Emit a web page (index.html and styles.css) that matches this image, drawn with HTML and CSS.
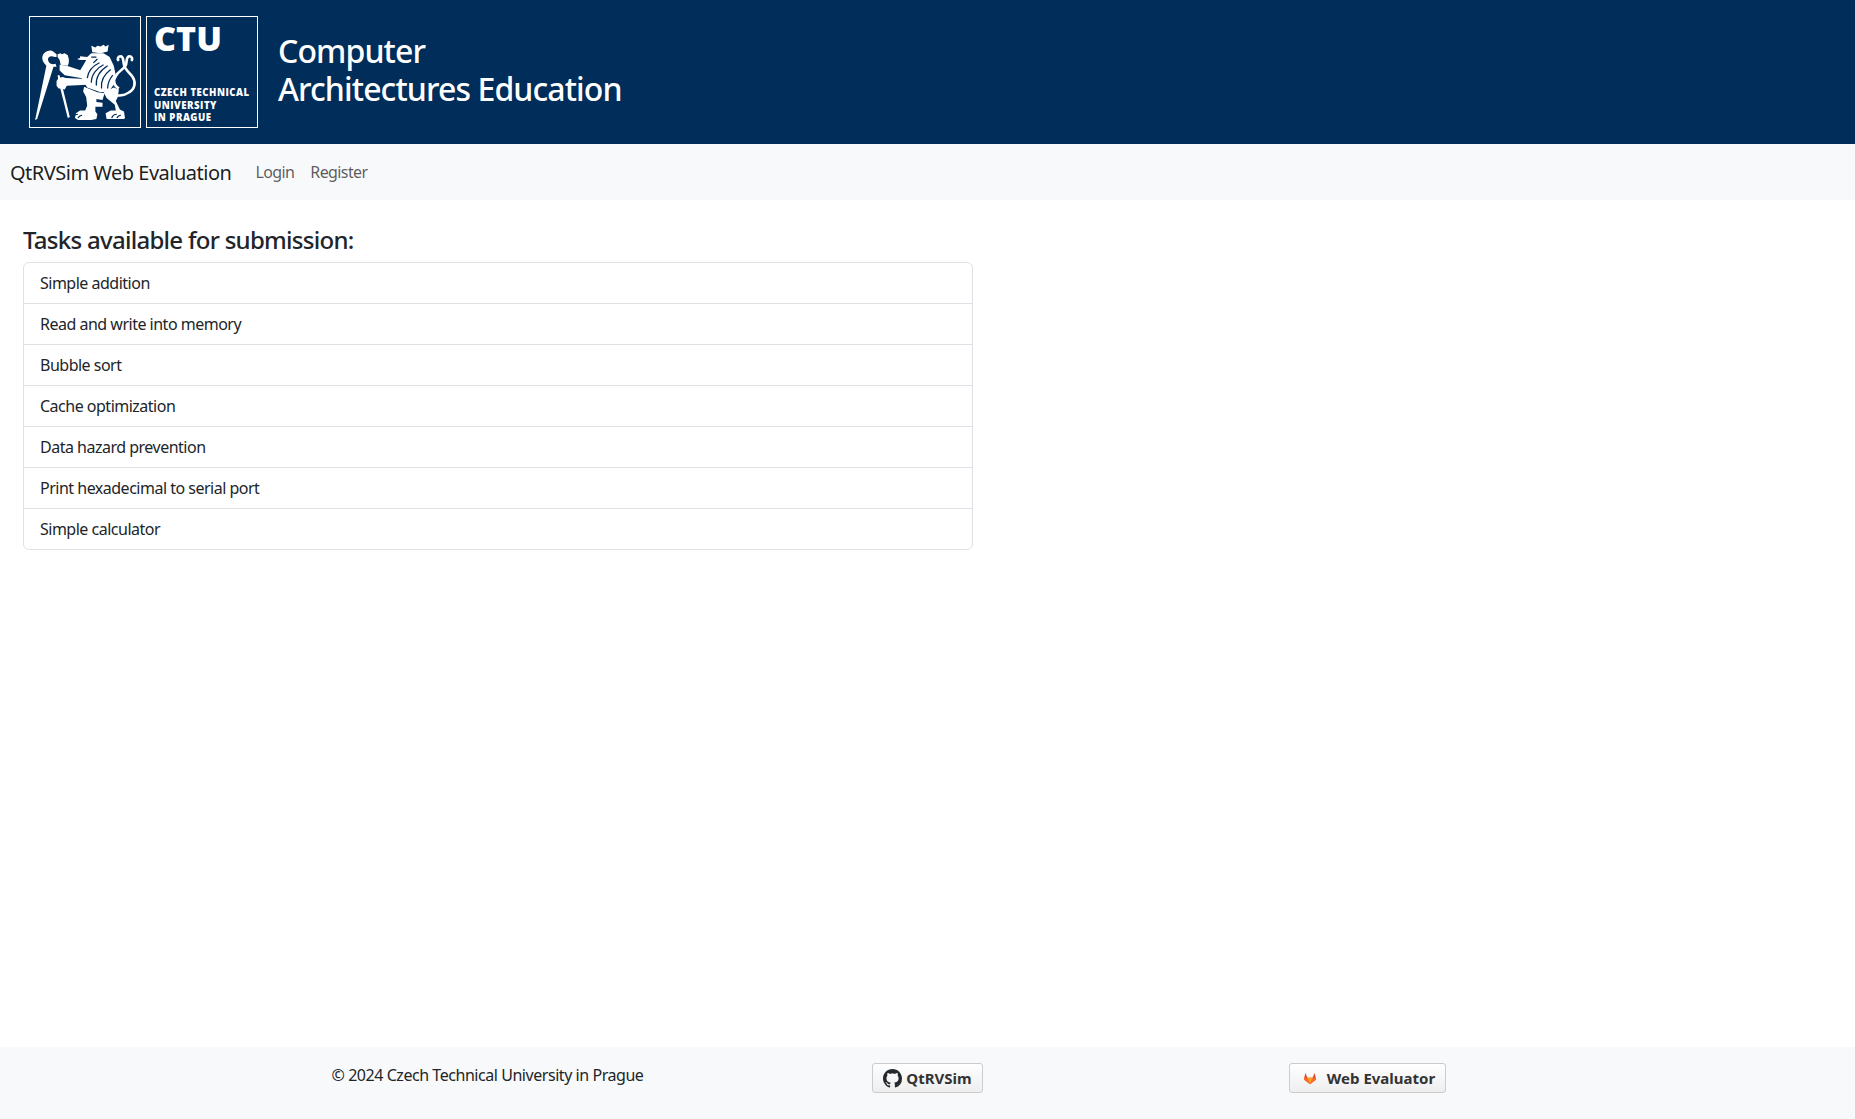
FILE: index.html
```html
<!DOCTYPE html>
<html lang="en">
<head>
<meta charset="utf-8">
<title>QtRVSim Web Evaluation</title>
<link rel="stylesheet" href="styles.css">
</head>
<body>
<header class="site-header">
  <div class="logo">
    <div class="logo-box">
      <svg class="lion" viewBox="0 0 112 112" aria-hidden="true">
        <g transform="translate(0 3) scale(1.04 0.97)">
        <g fill="#fff">
          <path fill-rule="evenodd" d="M20 32c-5 0-8 4-8 8 0 3 2 6 4 8L5 105l2-1 16-55 3 0-1-3c-3 1-6 0-7-3-1-2 0-5 3-5 2 0 3 1 5 1l0-3c-2-2-4-4-6-4z"/>
          <path d="M27 36l3-1 1 1 3-1 3 2 1 4 0 4-1 3-7-1-1-5-2-3z"/>
          <path d="M27 58l2 0 10 44-2 1-9-38z"/>
          <path d="M29 47l7 1 17 6 2 8-21-4-5-5z"/>
          <path d="M26 64l2-3 4-1 3 1 19 1 2 6-20 1-2 4-3-1-3 0-2-3z"/>
          <path d="M61 34l-1-7 4 2 2-2 3 1 3-2 2 2 3-2-1 7-7 2z"/>
          <path d="M49 38l7 1 4-4 12 0 6 4 4 9 2 10-2 10-5 7-8 1-13-5-5-9-2-9 4-7 2-4-6 0-3-1 3-1z"/>
          <path d="M53 70l13 6 7 1-2 7-6-1 0 3 6 1 0 4-7 0 0 5 2 3-1 5-5 1-13 0-3-2 1-5 4-3 5 0 2-5-1-9-3-6z"/>
          <path d="M72 76l10-5 5 2-1 8-2 4 4 9 4 2 1 7-1 1-17 0-1-6 5-3 5 0-1-6-8-7z"/>
        </g>
        <g fill="none" stroke="#fff" stroke-width="2.6">
          <path d="M78 78c6 2 14 2 19-2 6-4 7-11 3-17-3-4-7-7-8-12-1-4 0-8-3-9-3 0-4 3-2 5"/>
          <path d="M87 72c-5-3-6-9-3-13 2-5 8-7 10-12 1-4 0-8 3-9 3 0 4 3 2 5"/>
        </g>
        <g fill="none" stroke="#002d5a" stroke-width="1.2">
          <path d="M68 45c-6 3-11 8-12 16"/>
          <path d="M72 47c-6 3-12 10-12 19"/>
          <path d="M76 48c-6 4-12 11-11 21"/>
          <path d="M79 52c-5 4-10 11-9 20"/>
          <path d="M81 58c-3 4-5 9-5 14"/>
          <path d="M60 39h5M66 41l-4 4"/>
          <path d="M42 103c1-3 3-4 5-4M47 103c1-2 2-3 4-3"/>
          <path d="M80 103c1-3 3-4 5-4M85 103c1-2 2-3 4-3"/>
        </g>
        </g>
      </svg>
    </div>
    <div class="logo-box logo-text">
      <span class="ctu">CTU</span>
      <span class="ctu-name">CZECH TECHNICAL<br>UNIVERSITY<br>IN PRAGUE</span>
    </div>
  </div>
  <h1 class="site-title">Computer<br>Architectures Education</h1>
</header>

<nav class="navbar">
  <a class="brand" href="#">QtRVSim Web Evaluation</a>
  <a class="nav-link" href="#">Login</a>
  <a class="nav-link" href="#">Register</a>
</nav>

<main class="content">
  <h2 class="tasks-title">Tasks available for submission:</h2>
  <ul class="task-list">
    <li><a href="#">Simple addition</a></li>
    <li><a href="#">Read and write into memory</a></li>
    <li><a href="#">Bubble sort</a></li>
    <li><a href="#">Cache optimization</a></li>
    <li><a href="#">Data hazard prevention</a></li>
    <li><a href="#">Print hexadecimal to serial port</a></li>
    <li><a href="#">Simple calculator</a></li>
  </ul>
</main>

<footer class="footer">
  <div class="footer-row">
    <div class="footer-cell"><span class="copy">© 2024 Czech Technical University in Prague</span></div>
    <div class="footer-cell">
      <a class="btn" href="#">
        <svg class="btn-icon" viewBox="0 0 16 16" aria-hidden="true"><path fill="#24292e" d="M8 0C3.58 0 0 3.58 0 8c0 3.54 2.29 6.53 5.47 7.59.4.07.55-.17.55-.38 0-.19-.01-.82-.01-1.49-2.01.37-2.53-.49-2.69-.94-.09-.23-.48-.94-.82-1.13-.28-.15-.68-.52-.01-.53.63-.01 1.08.58 1.23.82.72 1.21 1.87.87 2.33.66.07-.52.28-.87.51-1.07-1.78-.2-3.64-.89-3.64-3.95 0-.87.31-1.59.82-2.15-.08-.2-.36-1.02.08-2.12 0 0 .67-.21 2.2.82.64-.18 1.32-.27 2-.27.68 0 1.36.09 2 .27 1.53-1.04 2.2-.82 2.2-.82.44 1.1.16 1.92.08 2.12.51.56.82 1.27.82 2.15 0 3.07-1.87 3.75-3.65 3.95.29.25.54.73.54 1.48 0 1.07-.01 1.93-.01 2.2 0 .21.15.46.55.38A8.013 8.013 0 0016 8c0-4.42-3.58-8-8-8z"/></svg>
        QtRVSim
      </a>
    </div>
    <div class="footer-cell">
      <a class="btn btn-gitlab" href="#">
        <svg class="gl-icon" viewBox="0 0 16 16" aria-hidden="true">
          <path fill="#e24329" d="M8 15 1 9.6 2.8 2.4 5 7.6h6l2.2-5.2L15 9.6z"/>
          <path fill="#fc6d26" d="M8 15 5 7.6H1.4L1 9.6zM8 15l3-7.4h3.6l.4 2z"/>
          <path fill="#fca326" d="M8 15 5 7.6h6z"/>
        </svg>
        Web Evaluator
      </a>
    </div>
  </div>
</footer>
</body>
</html>
```

FILE: styles.css
```css
* { box-sizing: border-box; }

html, body { height: 100%; }

body {
  margin: 0;
  min-height: 100vh;
  display: flex;
  flex-direction: column;
  font-family: "Noto Sans", "Open Sans", "Liberation Sans", sans-serif;
  font-size: 16px;
  color: #212529;
  background: #fff;
}

a { text-decoration: none; color: inherit; }

.site-header {
  height: 144px;
  flex: none;
  background: #002d5a;
  display: flex;
  align-items: center;
  padding-left: 29px;
  gap: 20px;
}

.logo { display: flex; gap: 5px; }

.logo-box {
  width: 112px;
  height: 112px;
  border: 1px solid #fff;
  color: #fff;
}

.lion { display: block; width: 110px; height: 110px; }

.logo-text {
  display: flex;
  flex-direction: column;
  justify-content: space-between;
  padding: 2px 0 3px 7px;
  font-family: "Open Sans", "Noto Sans", sans-serif;
}

.ctu { font-size: 34px; font-weight: 800; line-height: 38px; }

.ctu-name {
  font-size: 9.6px;
  font-weight: 800;
  line-height: 12.2px;
  letter-spacing: 0.5px;
  white-space: nowrap;
}

.site-title {
  margin: -5px 0 0;
  color: #fff;
  font-size: 32px;
  font-weight: 500;
  line-height: 38px;
  letter-spacing: -0.9px;
}

.navbar {
  height: 56px;
  flex: none;
  background: #f8f9fa;
  display: flex;
  align-items: center;
  padding-left: 10px;
}

.brand { font-size: 20px; color: rgba(0,0,0,.9); margin-right: 16px; letter-spacing: -0.5px; }

.nav-link { padding: 0 8px; color: rgba(0,0,0,.65); letter-spacing: -0.6px; }

.content { flex: 1; padding: 25px 0 0 23px; }

.tasks-title {
  margin: 0 0 7px;
  font-size: 24px;
  font-weight: 500;
  line-height: 30px;
  letter-spacing: -0.72px;
}

.task-list {
  width: 950px;
  margin: 0;
  padding: 0;
  list-style: none;
  border: 1px solid #dee2e6;
  border-radius: 6px;
}

.task-list li {
  height: 41px;
  padding: 0 16px;
  display: flex;
  align-items: center;
  border-top: 1px solid #dee2e6;
  letter-spacing: -0.5px;
}

.task-list li:first-child { height: 40px; border-top: 0; }

.footer {
  height: 72px;
  flex: none;
  background: #f8f9fa;
}

.footer-row {
  width: 1320px;
  margin: 0 auto;
  display: grid;
  grid-template-columns: repeat(3, 1fr);
}

.footer-cell { display: flex; justify-content: center; padding-top: 16px; }

.copy { color: #212529; letter-spacing: -0.45px; line-height: 24px; }

.btn {
  display: inline-flex;
  align-items: center;
  height: 30px;
  padding: 0 10px;
  gap: 4px;
  font-size: 15px;
  font-weight: 700;
  color: #333;
  border: 1px solid #ccc;
  border-radius: 3px;
  background: linear-gradient(#fff, #eee);
}

.btn-gitlab { gap: 10px; }

.btn-icon { width: 19px; height: 19px; }

.gl-icon { width: 14px; height: 14px; margin-left: 3px; }
```
